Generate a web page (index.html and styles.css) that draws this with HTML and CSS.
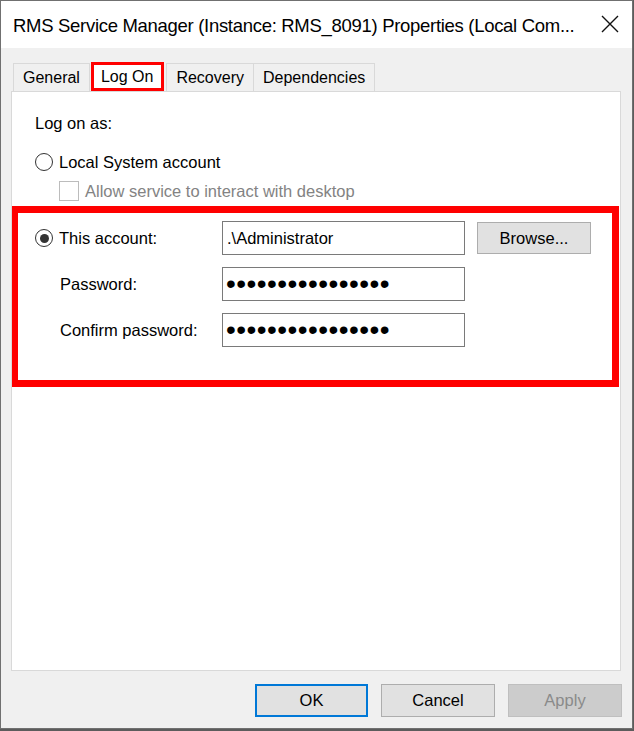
FILE: index.html
```html
<!DOCTYPE html>
<html lang="en">
<head>
    <meta charset="UTF-8">
    <title>RMS Service Manager Properties</title>
    <link rel="stylesheet" href="styles.css">
</head>
<body>
    <div class="window">
        <div class="titlebar">
            <span class="title">RMS Service Manager (Instance: RMS_8091) Properties (Local Com...</span>
            <svg class="close" width="18" height="18" viewBox="0 0 18 18">
                <path d="M1 1 L17 17 M17 1 L1 17" stroke="#111" stroke-width="1.4" fill="none"/>
            </svg>
        </div>

        <div class="dialog-body">
            <div class="tabs">
                <div class="tab">General</div>
                <div class="tab selected">Log On</div>
                <div class="tab">Recovery</div>
                <div class="tab">Dependencies</div>
            </div>

            <div class="panel">
                <div class="caption">Log on as:</div>

                <label class="option">
                    <span class="radio"></span>
                    <span>Local System account</span>
                </label>

                <label class="option sub disabled">
                    <span class="checkbox"></span>
                    <span>Allow service to interact with desktop</span>
                </label>

                <div class="highlight">
                    <label class="option">
                        <span class="radio checked"></span>
                        <span>This account:</span>
                    </label>
                    <input class="field" type="text" value=".\Administrator" readonly>
                    <button class="btn browse">Browse...</button>

                    <span class="field-label">Password:</span>
                    <input class="field secret" type="password" value="xxxxxxxxxxxxxxxx" readonly>
                    <span></span>

                    <span class="field-label">Confirm password:</span>
                    <input class="field secret" type="password" value="xxxxxxxxxxxxxxxx" readonly>
                    <span></span>
                </div>
            </div>

            <div class="footer">
                <button class="btn default">OK</button>
                <button class="btn">Cancel</button>
                <button class="btn" disabled>Apply</button>
            </div>
        </div>
    </div>
</body>
</html>
```

FILE: styles.css
```css
:root {
    --face: #f0f0f0;
    --line: #d9d9d9;
    --mark: #ff0000;
    --text: #000;
}

body {
    margin: 0;
    background-color: #5c5c5c;
    font-family: 'Liberation Sans', Arial, sans-serif;
    color: var(--text);
}

.window {
    width: 631px;
    height: 727px;
    border: 1px solid #707070;
    background-color: var(--face);
    display: flex;
    flex-direction: column;
}

.titlebar {
    height: 47px;
    background-color: #fff;
    display: flex;
    align-items: center;
    justify-content: space-between;
    padding: 0 13px 0 12px;
}

.title {
    font-size: 18.5px;
    letter-spacing: -0.3px;
    white-space: nowrap;
    padding-top: 2px;
}

.close {
    margin-top: -2px;
}

.dialog-body {
    flex: 1;
    padding: 15px 10px 0 10px;
    display: flex;
    flex-direction: column;
}

.tabs {
    display: flex;
    height: 28px;
    margin-left: 3px;
}

.tab {
    font-size: 16px;
    padding: 0 9px;
    border: 1px solid var(--line);
    border-bottom: none;
    margin-left: -1px;
    display: flex;
    align-items: center;
}

.tab.selected {
    position: relative;
    z-index: 1;
    align-self: flex-start;
    height: 23px;
    margin: -1px 0 0 1px;
    padding: 0 8px 0 7px;
    border: 3px solid var(--mark);
    background-color: #fff;
}

.tab.selected + .tab {
    margin-left: 2px;
}

.panel {
    width: 608px;
    height: 578px;
    border: 1px solid var(--line);
    background-color: #fff;
    font-size: 16.5px;
}

.caption {
    line-height: 20px;
    margin: 21px 0 0 23px;
}

.option {
    display: flex;
    align-items: center;
    gap: 6px;
    height: 20px;
    margin: 19px 0 0 23px;
}

.option.sub {
    margin: 9px 0 0 47px;
}

.disabled {
    color: #838383;
}

.radio {
    width: 16px;
    height: 16px;
    border: 1.5px solid #333;
    border-radius: 50%;
    display: flex;
    align-items: center;
    justify-content: center;
    flex-shrink: 0;
}

.radio.checked::after {
    content: '';
    width: 9px;
    height: 9px;
    border-radius: 50%;
    background-color: #333;
}

.checkbox {
    width: 18px;
    height: 18px;
    border: 1px solid #bcbcbc;
    background-color: #fff;
}

.highlight {
    margin: 5px 1px 0 0;
    border: 7px solid var(--mark);
    border-left-width: 6px;
    padding: 8px 0 33px 17px;
    display: grid;
    grid-template-columns: 175px 243px 114px;
    grid-auto-rows: 34px;
    column-gap: 12px;
    row-gap: 12px;
    align-items: center;
}

.highlight .option {
    margin: 0;
}

.field-label {
    padding-left: 25px;
}

.field {
    box-sizing: border-box;
    width: 243px;
    height: 34px;
    margin: 0;
    padding: 0 4px;
    border: 1px solid #7a7a7a;
    font-family: 'Liberation Sans', Arial, sans-serif;
    font-size: 16.5px;
    color: var(--text);
    outline: none;
}

.secret {
    font-size: 28px;
    letter-spacing: 0.45px;
    padding-left: 3px;
}

.btn {
    box-sizing: border-box;
    width: 114px;
    height: 33px;
    border: 1px solid #adadad;
    background-color: #e1e1e1;
    font-family: 'Liberation Sans', Arial, sans-serif;
    font-size: 16.5px;
    color: var(--text);
    padding: 0;
}

.browse {
    height: 32px;
}

.btn.default {
    border: 2px solid #0078d7;
    width: 113px;
}

.btn:disabled {
    background-color: #cccccc;
    border-color: #bfbfbf;
    color: #8a8a8a;
}

.footer {
    display: flex;
    justify-content: flex-end;
    gap: 13px;
    margin-top: 13px;
}
```
